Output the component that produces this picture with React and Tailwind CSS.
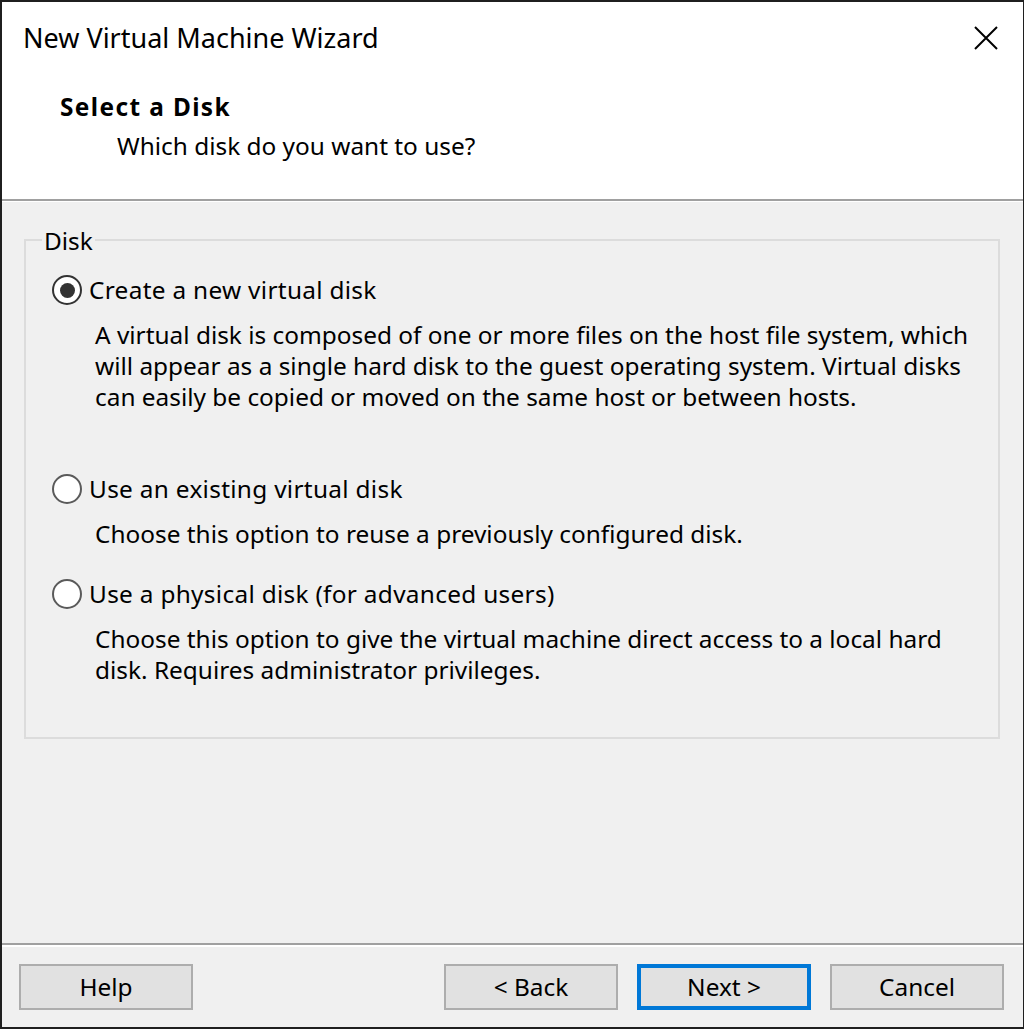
import React from 'react';

const font = { fontFamily: '"Noto Sans", "Open Sans", sans-serif' };

const Radio = ({ checked }) => (
  <span
    className={
      'w-[30px] h-[30px] rounded-full bg-white border-2 flex items-center justify-center shrink-0 ' +
      (checked ? 'border-[#333333]' : 'border-[#5a5a5a]')
    }
  >
    {checked && <span className="w-[15px] h-[15px] rounded-full bg-[#333333]" />}
  </span>
);

const Option = ({ checked, label, lines, className }) => (
  <div className={className}>
    <div className="h-[34px] flex items-center ml-[26px] gap-[7px]">
      <Radio checked={checked} />
      <span className="tracking-[0.3px]">{label}</span>
    </div>
    <div className="mt-[12px] ml-[69px] leading-[31px]">
      {lines.map((line, i) => (
        <div key={i} className="whitespace-nowrap">{line}</div>
      ))}
    </div>
  </div>
);

const Button = ({ children, primary, className = '' }) => (
  <button
    className={
      'h-[46px] w-[174px] bg-[#e1e1e1] flex items-center justify-center text-black ' +
      (primary ? 'border-4 border-[#0078d7] ' : 'border-2 border-[#adadad] ') +
      className
    }
  >
    {children}
  </button>
);

export default function App() {
  return (
    <div
      className="w-[1024px] h-[1029px] bg-[#f0f0f0] border-t-2 border-l-2 border-b-2 border-r border-[#1f1f1f] flex flex-col text-black text-[24.4px]"
      style={font}
    >
      <div className="h-[197px] bg-white">
        <div className="h-[72px] flex items-center justify-between">
          <span className="ml-[21px] text-[27px]">New Virtual Machine Wizard</span>
          <svg className="mr-[25px]" width="24" height="24" viewBox="0 0 24 24">
            <path d="M1 1 L23 23 M23 1 L1 23" stroke="#000" strokeWidth="2" fill="none" />
          </svg>
        </div>
        <div className="mt-[16px] h-[34px] flex items-center ml-[58px] font-bold tracking-[1.4px]">Select a Disk</div>
        <div className="mt-[5px] h-[34px] flex items-center ml-[115px]">Which disk do you want to use?</div>
      </div>
      <div className="h-[2px] bg-[#a0a0a0]" />
      <div className="h-px bg-white" />

      <div className="flex-1">
        <div className="relative mt-[37px] ml-[22px] mr-[23px] h-[500px] border-2 border-[#dcdcdc]">
          <span className="absolute left-[16px] -top-[18px] px-[2px] bg-[#f0f0f0]">Disk</span>
          <Option
            className="pt-[32px]"
            checked
            label="Create a new virtual disk"
            lines={[
              'A virtual disk is composed of one or more files on the host file system, which',
              'will appear as a single hard disk to the guest operating system. Virtual disks',
              'can easily be copied or moved on the same host or between hosts.',
            ]}
          />
          <Option
            className="mt-[60px]"
            label="Use an existing virtual disk"
            lines={['Choose this option to reuse a previously configured disk.']}
          />
          <Option
            className="mt-[28px]"
            label="Use a physical disk (for advanced users)"
            lines={[
              'Choose this option to give the virtual machine direct access to a local hard',
              'disk. Requires administrator privileges.',
            ]}
          />
        </div>
      </div>

      <div className="h-[2px] bg-[#a0a0a0]" />
      <div className="h-[2px] bg-white" />
      <div className="h-[80px] flex items-start pt-[17px]">
        <Button className="ml-[17px]">Help</Button>
        <div className="ml-auto mr-[19px] flex gap-[19px]">
          <Button>&lt; Back</Button>
          <Button primary>Next &gt;</Button>
          <Button>Cancel</Button>
        </div>
      </div>
    </div>
  );
}
